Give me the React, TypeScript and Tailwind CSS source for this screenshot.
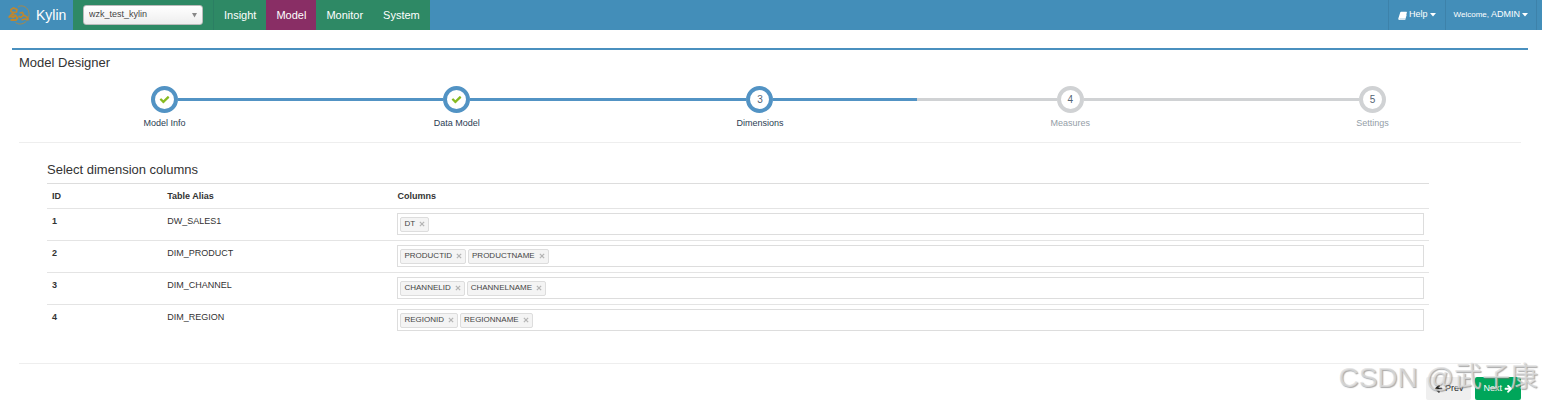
import React from "react";

const NAV_ITEMS = ["Insight", "Model", "Monitor", "System"];

const STEPS = [
  { title: "Model Info", state: "done" },
  { title: "Data Model", state: "done" },
  { title: "Dimensions", state: "active" },
  { title: "Measures", state: "todo" },
  { title: "Settings", state: "todo" },
];

const TABLES = [
  { alias: "DW_SALES1", columns: ["DT"] },
  { alias: "DIM_PRODUCT", columns: ["PRODUCTID", "PRODUCTNAME"] },
  { alias: "DIM_CHANNEL", columns: ["CHANNELID", "CHANNELNAME"] },
  { alias: "DIM_REGION", columns: ["REGIONID", "REGIONNAME"] },
];

const ICONS = {
  check:
    "M1671 566q0 40-28 68l-724 724-136 136q-28 28-68 28t-68-28l-136-136-362-362q-28-28-28-68t28-68l136-136q28-28 68-28t68 28l294 295 656-657q28-28 68-28t68 28l136 136q28 28 28 68z",
  arrowLeft:
    "M1664 896v128q0 53-32.5 90.5t-84.5 37.5h-704l293 294q38 36 38 90t-38 90l-75 76q-37 37-90 37-52 0-91-37l-651-652q-37-37-37-90 0-52 37-91l651-650q38-38 91-38 52 0 90 38l75 74q38 38 38 91t-38 91l-293 293h704q52 0 84.5 37.5t32.5 90.5z",
  arrowRight:
    "M1600 960q0 54-37 91l-651 651q-39 37-91 37-51 0-90-37l-75-75q-38-38-38-91t38-91l293-293h-704q-52 0-84.5-37.5t-32.5-90.5v-128q0-53 32.5-90.5t84.5-37.5h704l-293-294q-38-36-38-90t38-90l75-75q38-38 90-38 53 0 91 38l651 651q37 35 37 90z",
  book: "M620 160h1060q120 10 90 130l-330 1150q-30 110-150 110H330q-80 0-60 60 20 50 90 50h960q60 0 80-60l260-900q80 60 50 170l-270 860q-40 110-150 110H260Q70 1730 60 1540q0-60 20-120L440 300q40-130 180-140z",
};

const Icon = ({ name, className }: { name: keyof typeof ICONS; className: string }) => (
  <svg viewBox="0 0 1792 1792" fill="currentColor" className={className} aria-hidden="true">
    <path d={ICONS[name]} />
  </svg>
);

const Caret = () => (
  <svg width="6" height="4" viewBox="0 0 6 4" fill="currentColor" aria-hidden="true">
    <path d="M0 0H6L3 3.500Z" />
  </svg>
);

const KylinLogo = () => (
  <svg width="22" height="22" viewBox="0 0 22 22" fill="none" stroke="#bd8731" aria-hidden="true">
    <path d="M10 3C13.500 .5 18.500 2.500 20.300 6.500C22.300 11.500 20 17 15.500 19.300C12.500 20.700 9.500 20 7.500 18.500" strokeWidth="1" opacity=".8" />
    <path d="M3 5.500L5.500 4L9 5.500L8.500 8L5.500 8.500L3 7.500ZM5.500 8.500L3 11L6.500 10.500" strokeWidth="1.700" />
    <path d="M.5 13.500L3 12L5 13.500L7.500 11.500L9.500 14L8 16H2.500" strokeWidth="2" />
    <path d="M11.500 9L14.500 8.500L15.500 11L13 13.500L10.500 12M15.500 11L19 13L20 15.500L16.500 15L13.500 16" strokeWidth="1.700" />
  </svg>
);

const Navbar = () => (
  <nav className="flex h-[30px] items-stretch bg-[#438eb9] text-white">
    <a href="#" className="flex w-[73px] shrink-0 items-center gap-[6px] pl-2 text-sm">
      <KylinLogo />
      Kylin
    </a>
    <div className="flex items-center bg-[#2e8965] px-[10px]">
      <div className="relative flex">
        <select
          aria-label="Project"
          className="h-5 w-[120px] appearance-none rounded-[3px] border border-[#bbb] bg-gradient-to-b from-white to-[#eee] pl-[5px] text-[9px] text-[#444]"
        >
          <option>wzk_test_kylin</option>
        </select>
        <span className="pointer-events-none absolute top-2 right-[6px] text-[#888]">
          <svg width="5" height="5" viewBox="0 0 5 5" fill="currentColor" aria-hidden="true">
            <path d="M0 0H5L2.500 4.500Z" />
          </svg>
        </span>
      </div>
    </div>
    <ul className="flex border-l border-[#2b7f63] text-[11px]">
      {NAV_ITEMS.map((item) => (
        <li key={item} className={item === "Model" ? "bg-[#892e65]" : "bg-[#2e8965]"}>
          <a href="#" className="flex h-full items-center px-[10px]">
            {item}
          </a>
        </li>
      ))}
    </ul>
    <div className="mr-[5px] ml-auto flex border-r border-[#3d82aa] text-[9px]">
      <button className="flex items-center gap-[2px] border-l border-[#3d82aa] px-[9px]">
        <Icon name="book" className="size-[9px]" />
        Help
        <Caret />
      </button>
      <button className="flex items-center gap-[2px] border-l border-[#3d82aa] px-2">
        <span className="text-[8px]">Welcome,</span>
        ADMIN
        <Caret />
      </button>
    </div>
  </nav>
);

const Wizard = () => (
  <ol className="grid grid-cols-[291fr_293fr_313fr_307fr_297fr]">
    {STEPS.map((step, index) => {
      const todo = step.state === "todo";
      const line = todo ? "bg-[#d0d2d4]" : "bg-[#5293c4]";
      return (
        <li key={step.title} className="flex flex-col items-center">
          <div className="flex w-full items-center">
            <div className={`h-[3px] flex-1 ${index === 0 ? "" : line}`} />
            <span
              className={`flex size-[27px] items-center justify-center rounded-full border-4 bg-white text-[10px] text-[#546474] ${
                todo ? "border-[#d0d2d4]" : "border-[#5293c4]"
              }`}
            >
              {step.state === "done" ? <Icon name="check" className="size-[11px] text-[#87ba21]" /> : index + 1}
            </span>
            <div className={`h-[3px] flex-1 ${index === STEPS.length - 1 ? "" : line}`} />
          </div>
          <span className={`mt-1 text-[9px] leading-[12px] ${todo ? "text-[#949ea7]" : "text-[#2b3d53]"}`}>
            {step.title}
          </span>
        </li>
      );
    })}
  </ol>
);

const ColumnPicker = ({ alias, columns }: { alias: string; columns: string[] }) => (
  <div className="flex h-[22px] items-center gap-[2px] border border-[#ddd] px-[2px]">
    {columns.map((column) => (
      <span
        key={column}
        className="flex h-[15px] items-center gap-1 rounded-[2px] border border-[#ddd] bg-[#f4f4f4] px-[3px] text-[8px] text-[#444]"
      >
        {column}
        <button aria-label={`Remove ${column}`} className="flex items-center">
          <svg width="6" height="6" viewBox="0 0 7 7" stroke="#b5b5b5" strokeWidth="1.500">
            <path d="M1 1L6 6M6 1L1 6" />
          </svg>
        </button>
      </span>
    ))}
    <input aria-label={`Columns of ${alias}`} className="min-w-0 flex-1 text-[8px] outline-none" />
  </div>
);

const DimensionTable = () => (
  <table className="w-15/16 table-fixed text-left text-[9px] leading-[14px] text-[#333]">
    <thead>
      <tr className="h-[25px] border-t border-[#ddd]">
        <th className="w-1/12 px-[5px]">ID</th>
        <th className="w-1/6 px-[5px]">Table Alias</th>
        <th className="px-[5px]">Columns</th>
      </tr>
    </thead>
    <tbody>
      {TABLES.map((table, index) => (
        <tr key={table.alias} className="border-t border-[#e4e4e4] align-top">
          <th className="px-[5px] pt-[5px]">{index + 1}</th>
          <td className="px-[5px] pt-[5px]">{table.alias}</td>
          <td className="px-[5px] pt-1 pb-[5px]">
            <ColumnPicker alias={table.alias} columns={table.columns} />
          </td>
        </tr>
      ))}
    </tbody>
  </table>
);

const App = () => {
  return (
    <div className="relative bg-white pb-1 font-['Liberation_Sans',sans-serif] text-[#333]">
      <Navbar />
      <main className="mt-[18px] mr-[14px] ml-3 border-t-2 border-[#4a90bf] pr-[7px] pl-[7px]">
        <h1 className="pt-[5px] text-[13px] leading-4">Model Designer</h1>
        <div className="mt-[15px] border-b border-[#eee] pb-[13px]">
          <Wizard />
        </div>
        <section className="pt-[18px] pb-[27px] pl-7">
          <h2 className="mb-1 text-[13px] leading-[18px]">Select dimension columns</h2>
          <DimensionTable />
        </section>
        <div className="flex justify-end gap-1 border-t border-[#eee] pt-[13px] text-[9px]">
          <button className="flex h-[23px] items-center gap-[2px] rounded-[2px] bg-[#efefef] px-2 text-[#222]">
            <Icon name="arrowLeft" className="size-[9px]" />
            Prev
          </button>
          <button className="flex h-[23px] items-center gap-[2px] rounded-[2px] bg-[#00a65a] px-2 text-white">
            Next
            <Icon name="arrowRight" className="size-[9px]" />
          </button>
        </div>
      </main>
      <div className="pointer-events-none absolute right-1 bottom-1 font-['Liberation_Sans','Noto_Sans_CJK_SC',sans-serif] text-[28px] leading-[44px] whitespace-nowrap text-[#dedede]/75 [text-shadow:1px_1px_1px_#777777a0]">
        CSDN @武子康
      </div>
    </div>
  );
};

export default App;
